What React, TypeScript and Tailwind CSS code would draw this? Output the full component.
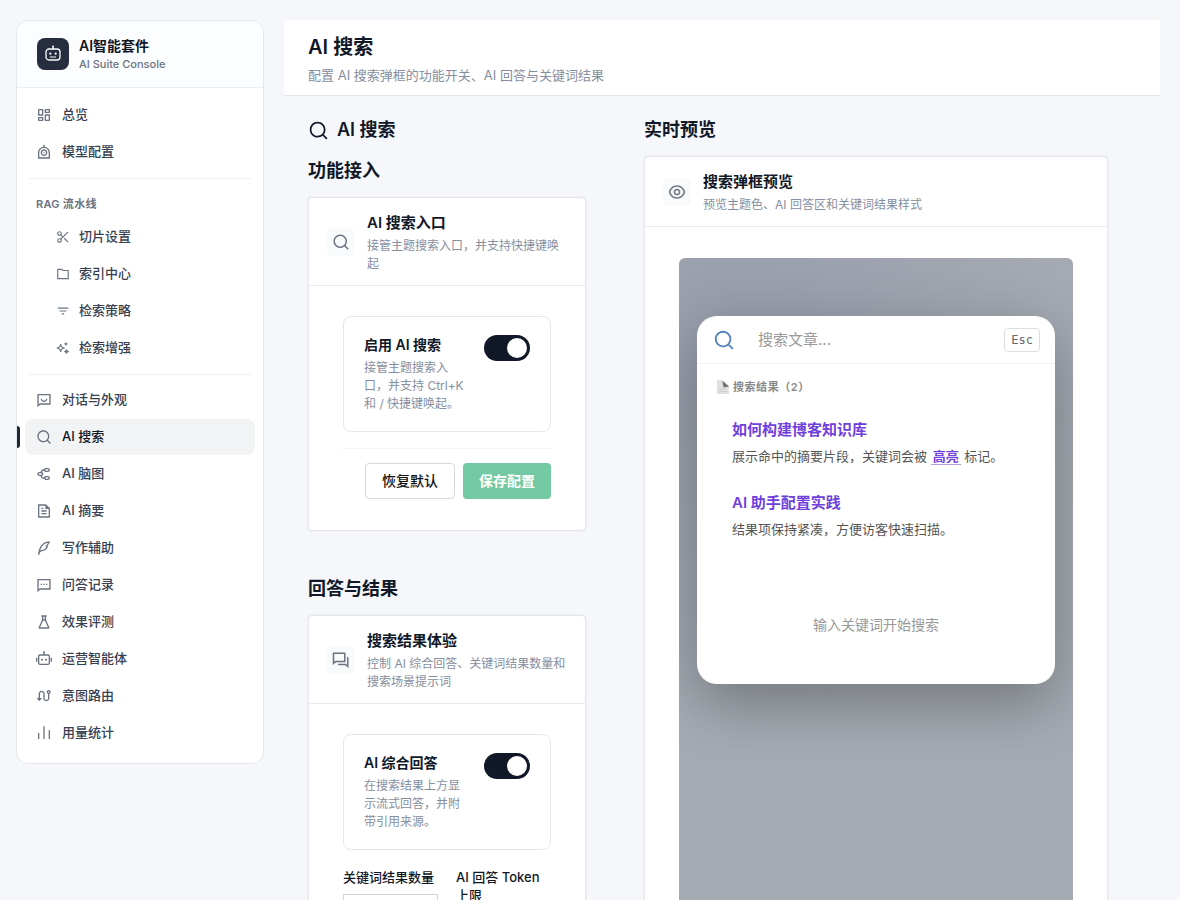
import type { ReactNode } from "react";
import {
  RiBarChartLine,
  RiChatSmileLine,
  RiDashboardLine,
  RiEyeLine,
  RiFileTextLine,
  RiFilter3Line,
  RiFlaskLine,
  RiFolderLine,
  RiMessage2Line,
  RiMindMap,
  RiQuestionAnswerLine,
  RiQuillPenLine,
  RiRobot2Line,
  RiRobotLine,
  RiRouteLine,
  RiScissorsLine,
  RiSearchLine,
  RiSparklingLine,
} from "react-icons/ri";
import type { IconType } from "react-icons";

type NavItem = { label: string; icon: IconType; active?: boolean };

const topItems: NavItem[] = [
  { label: "总览", icon: RiDashboardLine },
  { label: "模型配置", icon: RiRobotLine },
];

const ragItems: NavItem[] = [
  { label: "切片设置", icon: RiScissorsLine },
  { label: "索引中心", icon: RiFolderLine },
  { label: "检索策略", icon: RiFilter3Line },
  { label: "检索增强", icon: RiSparklingLine },
];

const featureItems: NavItem[] = [
  { label: "对话与外观", icon: RiChatSmileLine },
  { label: "AI 搜索", icon: RiSearchLine, active: true },
  { label: "AI 脑图", icon: RiMindMap },
  { label: "AI 摘要", icon: RiFileTextLine },
  { label: "写作辅助", icon: RiQuillPenLine },
  { label: "问答记录", icon: RiMessage2Line },
  { label: "效果评测", icon: RiFlaskLine },
  { label: "运营智能体", icon: RiRobot2Line },
  { label: "意图路由", icon: RiRouteLine },
  { label: "用量统计", icon: RiBarChartLine },
];

function NavLink({ item, nested = false }: { item: NavItem; nested?: boolean }) {
  const Icon = item.icon;
  return (
    <li className="relative">
      {item.active && (
        <span className="absolute top-[7px] -left-2 h-[22px] w-[3px] rounded-r-sm bg-[#1f2937]" />
      )}
      <a
        href="#"
        aria-current={item.active ? "page" : undefined}
        className={`flex h-9 items-center rounded-lg text-[13px] font-medium ${
          nested ? "gap-[9px] pl-[31px]" : "gap-2.5 pl-[11px]"
        } ${item.active ? "bg-[#f1f3f5] text-[#111827]" : "text-[#374151]"}`}
      >
        <Icon className={`shrink-0 text-[#6b7280] ${nested ? "size-3.5" : "size-4"}`} />
        {item.label}
      </a>
    </li>
  );
}

function NavList({ items, nested }: { items: NavItem[]; nested?: boolean }) {
  return (
    <ul className="flex flex-col gap-px">
      {items.map((item) => (
        <NavLink key={item.label} item={item} nested={nested} />
      ))}
    </ul>
  );
}

function SuiteLogo() {
  return (
    <svg viewBox="0 0 18 18" className="size-[18px]" fill="none" stroke="currentColor" strokeLinecap="round">
      <rect x="2" y="4" width="14" height="11" rx="3" strokeWidth="1.3" />
      <path d="M9 4V2" strokeWidth="1.3" />
      <circle cx="9" cy="1.5" r="0.9" fill="currentColor" stroke="none" />
      <circle cx="6.3" cy="8.7" r="1.1" fill="currentColor" stroke="none" />
      <circle cx="11.7" cy="8.7" r="1.1" fill="currentColor" stroke="none" />
      <path d="M6.3 12h5.4" strokeWidth="1" />
    </svg>
  );
}

function Sidebar() {
  return (
    <aside className="w-62 shrink-0 rounded-xl border border-[#e3e6ea] bg-white">
      <div className="flex h-[67px] items-center gap-2.5 rounded-t-xl border-b border-[#eceef1] bg-[#fcfdfe] px-5">
        <span className="flex size-8 items-center justify-center rounded-lg bg-[#252d3e] text-white">
          <SuiteLogo />
        </span>
        <div>
          <p className="text-sm leading-5 font-semibold text-[#111827]">AI智能套件</p>
          <p className="text-[11px] leading-4 font-medium text-[#6b7280]">AI Suite Console</p>
        </div>
      </div>
      <nav className="px-2 pt-[9px] pb-3">
        <NavList items={topItems} />
        <hr className="mx-1 mt-2 mb-[15px] border-[#eff0f3]" />
        <h2 className="mb-[5px] pl-[11px] text-[11px] leading-5 font-semibold tracking-wide text-[#6b7280]">
          RAG 流水线
        </h2>
        <NavList items={ragItems} nested />
        <hr className="mx-1 mt-2 mb-[7px] border-[#eff0f3]" />
        <NavList items={featureItems} />
      </nav>
    </aside>
  );
}

function Card({
  icon: Icon,
  title,
  description,
  children,
}: {
  icon: IconType;
  title: string;
  description: string;
  children: ReactNode;
}) {
  return (
    <section className="rounded-sm border border-[#e3e6ea] bg-white shadow-[0_0_2px_rgba(0,0,0,0.08)]">
      <header className="flex items-center gap-3 border-b border-[#e8eaed] px-[18px] pt-[13px] pb-3">
        <span className="flex size-7 shrink-0 items-center justify-center rounded-md bg-[#f8fafc] text-[#6b7280]">
          <Icon className="size-[18px]" />
        </span>
        <div>
          <h3 className="text-[15px] leading-6 font-semibold text-[#111827]">{title}</h3>
          <p className="mt-0.5 text-xs leading-[18px] text-[#858ea0]">{description}</p>
        </div>
      </header>
      {children}
    </section>
  );
}

function ToggleRow({ id, title, description }: { id: string; title: string; description: string }) {
  return (
    <div className="flex items-start justify-between gap-5 rounded-lg border border-[#e5e7eb] px-5 py-[18px]">
      <label htmlFor={id} className="w-25">
        <span className="mb-1 block text-sm leading-5 font-semibold text-[#111827]">{title}</span>
        <span className="block text-xs leading-[18px] text-[#858ea0]">{description}</span>
      </label>
      <span className="relative h-[26px] w-[46px] shrink-0">
        <input
          id={id}
          type="checkbox"
          role="switch"
          defaultChecked
          className="peer block h-[26px] w-[46px] appearance-none rounded-full bg-[#d1d5db] checked:bg-[#111827]"
        />
        <span className="pointer-events-none absolute top-[3px] left-[3px] size-5 rounded-full bg-white peer-checked:left-[23px]" />
      </span>
    </div>
  );
}

function NumberField({ id, label, value }: { id: string; label: string; value: number }) {
  return (
    <div className="flex-1">
      <label htmlFor={id} className="mb-2 block text-[13px] leading-[18px] font-medium text-[#111827]">
        {label}
      </label>
      <input
        id={id}
        type="number"
        defaultValue={value}
        className="h-9 w-full border border-[#d1d5db] bg-white px-3 text-sm text-[#111827]"
      />
    </div>
  );
}

function SearchPreview() {
  return (
    <div className="mx-[34px] mt-[31px] h-[760px] overflow-hidden rounded-t-md bg-[#a6abb3] bg-[radial-gradient(circle_at_15%_12%,#979dab_0%,transparent_50%)] px-[18px] pt-[58px]">
      <div className="h-[368px] rounded-[20px] bg-white shadow-[0_20px_60px_rgba(0,0,0,0.3)]">
        <div className="flex h-12 items-center border-b border-[#f3f3f3] pr-[15px] pl-4">
          <RiSearchLine className="size-[22px] shrink-0 text-[#5483bd]" />
          <input
            aria-label="搜索文章"
            placeholder="搜索文章..."
            className="ml-[23px] w-0 flex-1 pt-0.5 text-[15px] text-[#333333] placeholder:text-[#9a9a9a]"
          />
          <kbd className="rounded border border-[#dddddd] px-1.5 py-px font-['DejaVu_Sans_Mono',monospace] text-xs leading-5 text-[#666666]">
            Esc
          </kbd>
        </div>
        <div className="px-5 pt-[11px]">
          <p className="flex items-center gap-1 text-[11px] leading-6 font-semibold tracking-wider text-[#888888]">
            <svg viewBox="0 0 12 14" className="h-3.5 w-3">
              <path d="M0 0h6l6 6v8H0z" fill="#e0e0e0" />
              <path d="M5.5 1l6.5 5.5-5.5 1z" fill="#707070" />
              <path d="M2 9h7M2 11.5h8" stroke="#cecece" />
            </svg>
            搜索结果（2）
          </p>
          <ul className="px-[15px]">
            <li className="pt-[19px] pb-[23px]">
              <a href="#" className="block text-[15px] leading-6 font-semibold text-[#7040dc]">
                如何构建博客知识库
              </a>
              <p className="mt-0.5 text-[13px] leading-6 text-[#555555]">
                展示命中的摘要片段，关键词会被{" "}
                <mark className="border-b border-[#b39ddb] bg-transparent px-0.5 font-semibold text-[#7040dc]">
                  高亮
                </mark>{" "}
                标记。
              </p>
            </li>
            <li>
              <a href="#" className="block text-[15px] leading-6 font-semibold text-[#7040dc]">
                AI 助手配置实践
              </a>
              <p className="mt-0.5 text-[13px] leading-6 text-[#555555]">结果项保持紧凑，方便访客快速扫描。</p>
            </li>
          </ul>
          <p className="mt-18 text-center text-sm leading-6 text-[#999999]">输入关键词开始搜索</p>
        </div>
      </div>
    </div>
  );
}

export default function App() {
  return (
    <div className="flex h-screen items-start gap-5 overflow-hidden bg-[#f5f7fb] px-4 py-5 pr-5 font-['Inter','Noto_Sans_CJK_SC',sans-serif] antialiased">
      <Sidebar />
      <main className="min-w-0 flex-1">
        <header className="border-b border-[#e2e5ea] bg-white px-6 pt-3 pb-[9px]">
          <h1 className="text-xl leading-[30px] font-semibold text-[#111827]">AI 搜索</h1>
          <p className="mt-[3px] text-[13px] leading-[21px] text-[#858ea0]">
            配置 AI 搜索弹框的功能开关、AI 回答与关键词结果
          </p>
        </header>
        <div className="flex items-start gap-[58px] pt-5 pr-[52px] pl-6">
          <div className="w-[278px] shrink-0">
            <h2 className="flex items-center gap-2 text-lg leading-7 font-semibold text-[#111827]">
              <RiSearchLine className="size-[21px]" />
              AI 搜索
            </h2>
            <h3 className="mt-[13px] mb-3 text-lg leading-7 font-semibold text-[#111827]">功能接入</h3>
            <Card icon={RiSearchLine} title="AI 搜索入口" description="接管主题搜索入口，并支持快捷键唤起">
              <div className="px-[34px] pt-[30px] pb-[31px]">
                <ToggleRow
                  id="enable-search"
                  title="启用 AI 搜索"
                  description="接管主题搜索入口，并支持 Ctrl+K 和 / 快捷键唤起。"
                />
                <div className="mt-4 flex justify-end gap-2 border-t border-[#f3f4f6] pt-3.5">
                  <button
                    type="button"
                    className="h-9 rounded-sm border border-[#d5d8dc] bg-white px-4 text-sm font-medium text-[#111111]"
                  >
                    恢复默认
                  </button>
                  <button type="button" className="h-9 rounded-sm bg-[#72c9a3] px-4 text-sm font-semibold text-white">
                    保存配置
                  </button>
                </div>
              </div>
            </Card>
            <h3 className="mt-11 mb-3 text-lg leading-7 font-semibold text-[#111827]">回答与结果</h3>
            <Card
              icon={RiQuestionAnswerLine}
              title="搜索结果体验"
              description="控制 AI 综合回答、关键词结果数量和搜索场景提示词"
            >
              <div className="px-[34px] pt-[30px] pb-[31px]">
                <ToggleRow
                  id="enable-answer"
                  title="AI 综合回答"
                  description="在搜索结果上方显示流式回答，并附带引用来源。"
                />
                <div className="mt-[18px] flex gap-[18px]">
                  <NumberField id="result-count" label="关键词结果数量" value={10} />
                  <NumberField id="token-limit" label="AI 回答 Token 上限" value={1024} />
                </div>
              </div>
            </Card>
          </div>
          <div className="min-w-0 flex-1">
            <h2 className="mb-3 text-lg leading-7 font-semibold text-[#111827]">实时预览</h2>
            <Card icon={RiEyeLine} title="搜索弹框预览" description="预览主题色、AI 回答区和关键词结果样式">
              <SearchPreview />
            </Card>
          </div>
        </div>
      </main>
    </div>
  );
}
